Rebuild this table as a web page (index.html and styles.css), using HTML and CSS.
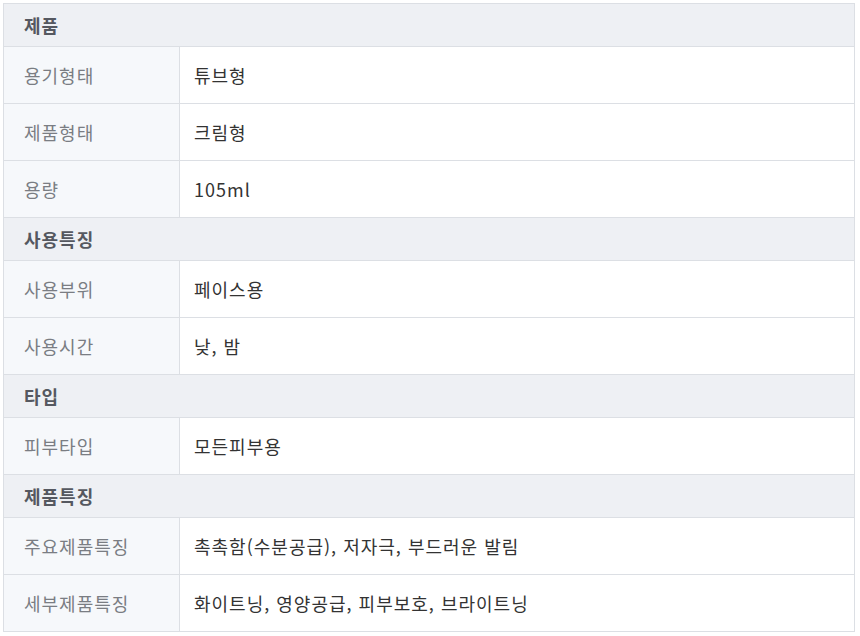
FILE: index.html
```html
<!DOCTYPE html>
<html lang="ko">
<head>
<meta charset="utf-8">
<link rel="stylesheet" href="styles.css">
</head>
<body>
<table class="spec">
  <colgroup><col class="c-label"><col class="c-value"></colgroup>
  <tbody>
    <tr class="sec"><th colspan="2">제품</th></tr>
    <tr><th>용기형태</th><td>튜브형</td></tr>
    <tr><th>제품형태</th><td>크림형</td></tr>
    <tr><th>용량</th><td>105ml</td></tr>
    <tr class="sec"><th colspan="2">사용특징</th></tr>
    <tr><th>사용부위</th><td>페이스용</td></tr>
    <tr><th>사용시간</th><td>낮, 밤</td></tr>
    <tr class="sec"><th colspan="2">타입</th></tr>
    <tr><th>피부타입</th><td>모든피부용</td></tr>
    <tr class="sec"><th colspan="2">제품특징</th></tr>
    <tr><th>주요제품특징</th><td>촉촉함(수분공급), 저자극, 부드러운 발림</td></tr>
    <tr><th>세부제품특징</th><td>화이트닝, 영양공급, 피부보호, 브라이트닝</td></tr>
  </tbody>
</table>
</body>
</html>
```

FILE: styles.css
```css
html, body {
  margin: 0;
  padding: 0;
  background: #ffffff;
}
body {
  padding: 3px 5px 0 3px;
  font-family: "Noto Sans CJK KR", "Noto Sans", sans-serif;
}
.spec {
  width: 852px;
  border-collapse: collapse;
  border: 1px solid #dcdfe4;
  font-size: 18px;
  letter-spacing: 1px;
}
.c-label { width: 176px; }
.spec th, .spec td {
  border: 1px solid #dcdfe4;
  text-align: left;
  padding: 0;
  vertical-align: middle;
}
.spec tr th {
  height: 56px;
  background: #f6f8fb;
  color: #7a7d83;
  font-weight: normal;
  padding-left: 20px;
}
.spec td {
  height: 56px;
  color: #333333;
  padding-left: 14px;
}
.spec tr.sec th {
  height: 42px;
  background: #eef0f4;
  color: #555860;
  font-weight: bold;
}
```
